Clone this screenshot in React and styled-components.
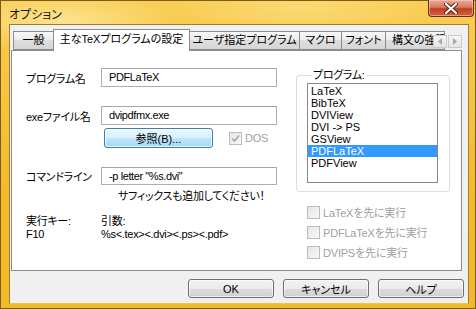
import React from 'react'
import { styled, createGlobalStyle } from 'styled-components'

const ui = `"Liberation Sans", "Noto Sans CJK JP", sans-serif`

const Global = createGlobalStyle`
  html, body {
    margin: 0;
    padding: 0;
    width: 476px;
    height: 309px;
    overflow: hidden;
    background: #f0f0f0;
  }
  * {
    box-sizing: border-box;
  }
`

const Window = styled.div`
  width: 476px;
  height: 309px;
  display: flex;
  flex-direction: column;
  padding: 0 6px 4px 8px;
  background:
    radial-gradient(ellipse 120px 30px at 60px 20px, rgba(255, 236, 170, 0.7), transparent),
    radial-gradient(ellipse 140px 30px at 300px 6px, rgba(255, 230, 150, 0.5), transparent),
    linear-gradient(to bottom, #f9cd53, #f3bb2c 60%, #f2b928);
  border: 1px solid #7a5d1c;
  font-family: ${ui};
  font-feature-settings: "palt";
`

const TitleBar = styled.div`
  height: 23px;
  display: flex;
  align-items: flex-start;
`

const Title = styled.div`
  padding-top: 4px;
  font-size: 12px;
  color: #1a1a1a;
`

const CloseButton = styled.div`
  margin-left: auto;
  margin-right: -5px;
  margin-top: -1px;
  width: 46px;
  height: 17px;
  display: flex;
  align-items: center;
  justify-content: center;
  border: 1px solid #6c2b1e;
  border-top: none;
  border-radius: 0 0 4px 4px;
  background: linear-gradient(to bottom, #e9a996, #d67a63 45%, #c23d21 55%, #d0653f);
  box-shadow: inset 0 0 0 1px rgba(255, 220, 200, 0.5);
`

const Client = styled.div`
  flex: 1;
  display: flex;
  flex-direction: column;
  background: #f0f0f0;
  border: 1px solid #9c7d34;
  border-bottom-color: #e8c35a;
  padding: 4px 6px 0 1px;
`

const TabStrip = styled.div`
  position: relative;
  height: 21px;
  display: flex;
  align-items: flex-end;
  padding-left: 2px;
`

const Tab = styled.div`
  position: relative;
  height: ${p => (p.$active ? '22px' : '19px')};
  width: ${p => p.$w}px;
  margin-bottom: ${p => (p.$active ? '-1px' : '0')};
  margin-right: -1px;
  z-index: ${p => (p.$active ? 2 : 1)};
  flex-shrink: 0;
  overflow: hidden;
  white-space: nowrap;
  text-align: ${p => (p.$clip ? 'left' : 'center')};
  padding-left: ${p => (p.$clip ? '6px' : '0')};
  border: 1px solid #898c95;
  border-bottom: ${p => (p.$active ? 'none' : '1px solid #898c95')};
  background: ${p => (p.$active ? '#ffffff' : 'linear-gradient(to bottom, #f7f7f7, #ebebeb 50%, #dedede 50%, #d6d6d6)')};
  font-size: 11px;
  line-height: ${p => (p.$active ? '19px' : '16px')};
  color: #000;
`

const Arrows = styled.div`
  position: absolute;
  right: 0;
  top: 6px;
  display: flex;
  gap: 1px;
  z-index: 3;
`

const ArrowButton = styled.div`
  width: 14px;
  height: 13px;
  display: flex;
  align-items: center;
  justify-content: center;
  border: 1px solid #c8cbd0;
  background: linear-gradient(to bottom, #f6f6f6, #e4e4e4);
`

const Panel = styled.div`
  height: 221px;
  display: flex;
  border: 1px solid #898c95;
  background: #ffffff;
  padding: 17px 0 0 14px;
`

const LeftColumn = styled.div`
  width: 251px;
  display: flex;
  flex-direction: column;
`

const FieldRow = styled.div`
  display: flex;
  align-items: center;
  height: 19px;
  margin-top: ${p => p.$mt || 0}px;
`

const Label = styled.div`
  width: 75px;
  font-size: 11px;
  letter-spacing: -0.3px;
  white-space: nowrap;
  color: #000;
`

const TextBox = styled.div`
  width: 176px;
  height: ${p => p.$h || 19}px;
  border: 1px solid #abadb3;
  border-top-color: #a3a6ad;
  padding-left: 7px;
  font-size: 11px;
  letter-spacing: -0.4px;
  line-height: 17px;
  color: #000;
  white-space: pre;
`

const BrowseRow = styled.div`
  display: flex;
  align-items: center;
  margin-top: 3px;
  padding-left: 78px;
  gap: 16px;
`

const FocusButton = styled.div`
  width: 109px;
  height: 20px;
  display: flex;
  align-items: center;
  justify-content: center;
  border: 1px solid #3c7fb1;
  border-radius: 3px;
  background: linear-gradient(to bottom, #eaf6fd, #d9f0fc 50%, #bee6fd 50%, #a7d9f5);
  box-shadow: inset 0 0 0 1px rgba(255, 255, 255, 0.7);
  font-size: 11px;
  color: #000;
`

const Check = styled.div`
  display: flex;
  align-items: center;
  gap: 3px;
  font-size: 11px;
  letter-spacing: -0.2px;
  white-space: nowrap;
  color: #a0a0a0;
  margin-top: ${p => p.$mt || 0}px;
`

const Box = styled.div`
  width: 13px;
  height: 13px;
  border: 1px solid #bcbcbc;
  background: linear-gradient(135deg, #e6e6e6, #f8f8f8);
  display: flex;
  align-items: center;
  justify-content: center;
`

const Note = styled.div`
  margin-top: 4px;
  padding-left: 92px;
  font-size: 11px;
  letter-spacing: -0.3px;
  line-height: 14px;
  white-space: nowrap;
  color: #000;
`

const InfoGrid = styled.div`
  margin-top: 12px;
  display: grid;
  grid-template-columns: 75px 1fr;
  font-size: 11px;
  line-height: 13px;
  letter-spacing: -0.3px;
  color: #000;
`

const RightColumn = styled.div`
  margin-left: 19px;
  width: 154px;
  display: flex;
  flex-direction: column;
`

const GroupBox = styled.fieldset`
  margin: 0;
  padding: 0 11px 8px 10px;
  border: 1px solid #d5dfe5;
  border-radius: 3px;
`

const Legend = styled.legend`
  margin-left: 5px;
  padding: 0 1px;
  font-size: 11px;
  line-height: 14px;
  letter-spacing: -0.3px;
  color: #000;
`

const ListBox = styled.div`
  margin-top: 1px;
  width: 131px;
  height: 100px;
  border: 1px solid #828790;
  padding-top: 1px;
`

const ListItem = styled.div`
  height: 12px;
  line-height: 12px;
  padding-left: 3px;
  font-size: 11px;
  color: ${p => (p.$selected ? '#ffffff' : '#000000')};
  background: ${p => (p.$selected ? '#3399ff' : 'transparent')};
`

const Options = styled.div`
  margin-top: 12px;
  padding-left: 11px;
  display: flex;
  flex-direction: column;
  gap: 4px;
`

const ButtonBar = styled.div`
  display: flex;
  justify-content: flex-end;
  gap: 9px;
  margin-top: 8px;
  margin-right: -2px;
`

const DialogButton = styled.div`
  width: 86px;
  height: 19px;
  display: flex;
  align-items: center;
  justify-content: center;
  border: 1px solid #707070;
  border-radius: 3px;
  background: linear-gradient(to bottom, #f2f2f2, #ebebeb 50%, #dddddd 50%, #cfcfcf);
  box-shadow: inset 0 0 0 1px rgba(255, 255, 255, 0.6);
  font-size: 11px;
  color: #000;
`

const tabs = [
  { label: '一般', w: 41 },
  { label: '主なTeXプログラムの設定', w: 137, active: true },
  { label: 'ユーザ指定プログラム', w: 111 },
  { label: 'マクロ', w: 43 },
  { label: 'フォント', w: 45 },
  { label: '構文の強調表示', w: 60, clip: true },
]

const programs = ['LaTeX', 'BibTeX', 'DVIView', 'DVI -> PS', 'GSView', 'PDFLaTeX', 'PDFView']

function CloseGlyph() {
  return (
    <svg width="14" height="11" viewBox="0 0 14 11">
      <path d="M2 1 L12 10 M12 1 L2 10" stroke="#5a1a10" strokeWidth="4" strokeLinecap="round" />
      <path d="M2 1 L12 10 M12 1 L2 10" stroke="#ffffff" strokeWidth="2.2" strokeLinecap="round" />
    </svg>
  )
}

function Arrow({ dir }) {
  return (
    <svg width="4" height="7" viewBox="0 0 4 7">
      <path d={dir === 'left' ? 'M4 0 L0 3.5 L4 7 Z' : 'M0 0 L4 3.5 L0 7 Z'} fill="#a8a8a8" />
    </svg>
  )
}

function Tick() {
  return (
    <svg width="9" height="9" viewBox="0 0 9 9">
      <path d="M1 4.5 L3.5 7 L8 1.5" stroke="#a6a6a6" strokeWidth="1.6" fill="none" />
    </svg>
  )
}

export default function App() {
  return (
    <>
      <Global />
      <Window>
        <TitleBar>
          <Title>オプション</Title>
          <CloseButton>
            <CloseGlyph />
          </CloseButton>
        </TitleBar>
        <Client>
          <TabStrip>
            {tabs.map(t => (
              <Tab key={t.label} $w={t.w} $active={t.active} $clip={t.clip}>
                {t.label}
              </Tab>
            ))}
            <Arrows>
              <ArrowButton>
                <Arrow dir="left" />
              </ArrowButton>
              <ArrowButton>
                <Arrow dir="right" />
              </ArrowButton>
            </Arrows>
          </TabStrip>
          <Panel>
            <LeftColumn>
              <FieldRow>
                <Label>プログラム名</Label>
                <TextBox>PDFLaTeX</TextBox>
              </FieldRow>
              <FieldRow $mt={19}>
                <Label>exeファイル名</Label>
                <TextBox>dvipdfmx.exe</TextBox>
              </FieldRow>
              <BrowseRow>
                <FocusButton>参照(B)...</FocusButton>
                <Check>
                  <Box>
                    <Tick />
                  </Box>
                  DOS
                </Check>
              </BrowseRow>
              <FieldRow $mt={18}>
                <Label>コマンドライン</Label>
                <TextBox $h={18}>-p letter "%s.dvi"</TextBox>
              </FieldRow>
              <Note>サフィックスも追加してください！</Note>
              <InfoGrid>
                <span>実行キー:</span>
                <span>引数:</span>
                <span>F10</span>
                <span>%s&lt;.tex&gt;&lt;.dvi&gt;&lt;.ps&gt;&lt;.pdf&gt;</span>
              </InfoGrid>
            </LeftColumn>
            <RightColumn>
              <GroupBox>
                <Legend>プログラム:</Legend>
                <ListBox>
                  {programs.map(p => (
                    <ListItem key={p} $selected={p === 'PDFLaTeX'}>
                      {p}
                    </ListItem>
                  ))}
                </ListBox>
              </GroupBox>
              <Options>
                <Check>
                  <Box />
                  LaTeXを先に実行
                </Check>
                <Check>
                  <Box />
                  PDFLaTeXを先に実行
                </Check>
                <Check>
                  <Box />
                  DVIPSを先に実行
                </Check>
              </Options>
            </RightColumn>
          </Panel>
          <ButtonBar>
            <DialogButton>OK</DialogButton>
            <DialogButton>キャンセル</DialogButton>
            <DialogButton>ヘルプ</DialogButton>
          </ButtonBar>
        </Client>
      </Window>
    </>
  )
}
